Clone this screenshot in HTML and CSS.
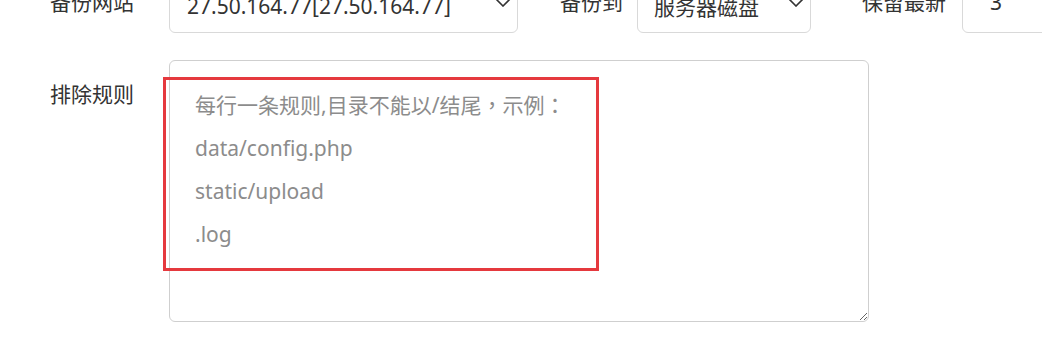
FILE: index.html
```html
<!DOCTYPE html>
<html lang="zh-CN">
<head>
<meta charset="utf-8">
<title>备份设置</title>
<link rel="stylesheet" href="styles.css">
</head>
<body>
<form class="form">
  <div class="row row-top">
    <label class="lbl lbl-first">备份网站</label>
    <div class="sel sel-site">
      <span class="sel-text">27.50.164.77[27.50.164.77]</span>
      <svg class="chev" width="18" height="10" viewBox="0 0 18 10"><polyline points="1,1 9,9 17,1" fill="none" stroke="#333" stroke-width="1.6"/></svg>
    </div>
    <label class="lbl lbl-inline lbl-dest">备份到</label>
    <div class="sel sel-dest">
      <span class="sel-text">服务器磁盘</span>
      <svg class="chev" width="18" height="10" viewBox="0 0 18 10"><polyline points="1,1 9,9 17,1" fill="none" stroke="#333" stroke-width="1.6"/></svg>
    </div>
    <label class="lbl lbl-inline lbl-keep">保留最新</label>
    <div class="num">3</div>
  </div>
  <div class="row row-rules">
    <label class="lbl lbl-first lbl-top">排除规则</label>
    <div class="ta-wrap">
      <textarea class="rules" lang="zh-TW" placeholder="每行一条规则,目录不能以/结尾，示例：&#10;data/config.php&#10;static/upload&#10;.log"></textarea>
      <div class="mark"></div>
    </div>
  </div>
</form>
</body>
</html>
```
FILE: styles.css
```css
html, body {
  margin: 0;
  padding: 0;
  background: #fff;
  overflow: hidden;
}

body {
  width: 1042px;
  height: 346px;
  font-family: "Noto Sans", "Noto Sans CJK SC", sans-serif;
  font-size: 21px;
  color: #333;
}

.form {
  margin: -29px 0 0 0;
  display: flex;
  flex-direction: column;
  gap: 27px;
}

.row {
  display: flex;
}

.row-top {
  align-items: center;
  height: 62px;
  white-space: nowrap;
}

.lbl {
  line-height: 30px;
  color: #333;
  flex: none;
}

.lbl-first {
  width: 119px;
  padding-left: 50px;
}

.lbl-dest {
  margin-left: 42px;
  margin-right: 14px;
}

.lbl-keep {
  margin-left: 51px;
  margin-right: 16px;
}

.sel {
  flex: none;
  box-sizing: border-box;
  height: 62px;
  border: 1px solid #d9d9d9;
  border-radius: 6px;
  display: flex;
  align-items: center;
  justify-content: space-between;
  padding: 0 5px 0 17px;
  background: #fff;
}

.sel-site {
  width: 349px;
}

.sel-dest {
  width: 174px;
  padding-left: 16px;
}

.sel-text {
  color: #333;
  padding-top: 8px;
}

.chev {
  margin-top: 0;
  flex: none;
}

.num {
  flex: none;
  box-sizing: border-box;
  width: 200px;
  height: 62px;
  border: 1px solid #d9d9d9;
  border-radius: 6px;
  padding-left: 27px;
  line-height: 60px;
  color: #333;
}

.row-rules {
  align-items: flex-start;
}

.lbl-top {
  padding-top: 19px;
}

.ta-wrap {
  position: relative;
  width: 700px;
  height: 262px;
}

.rules {
  box-sizing: border-box;
  width: 700px;
  height: 262px;
  margin: 0;
  display: block;
  border: 1px solid #cfcfcf;
  border-radius: 6px;
  padding: 23px 25px;
  font-family: "Noto Sans", "Noto Sans CJK TC", sans-serif;
  font-size: 21px;
  line-height: 43px;
  color: #333;
  background: #fff;
  outline: none;
}

.rules::placeholder {
  color: #8c8c8c;
  opacity: 1;
}

.mark {
  position: absolute;
  left: -6px;
  top: 17px;
  width: 436px;
  height: 194px;
  box-sizing: border-box;
  border: 3px solid #e5393e;
  pointer-events: none;
}
```
